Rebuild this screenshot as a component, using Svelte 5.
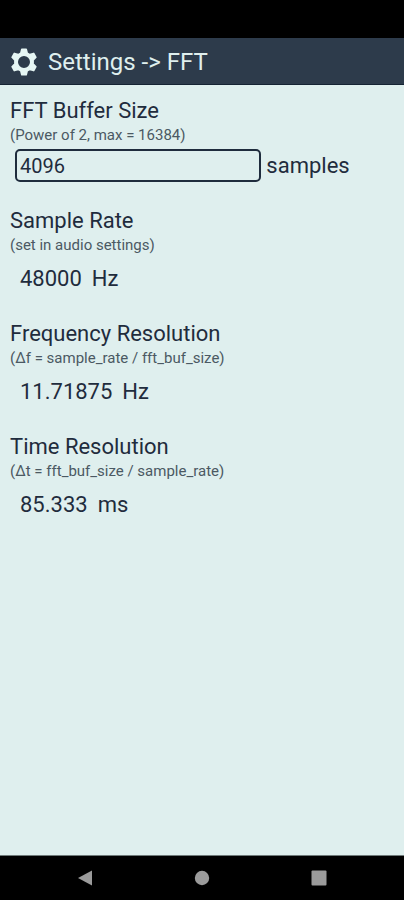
<script>
  let bufferSize = $state('4096');

  const readouts = [
    { title: 'Sample Rate', hint: '(set in audio settings)', value: '48000', unit: 'Hz' },
    { title: 'Frequency Resolution', hint: '(Δf = sample_rate / fft_buf_size)', value: '11.71875', unit: 'Hz' },
    { title: 'Time Resolution', hint: '(Δt = fft_buf_size / sample_rate)', value: '85.333', unit: 'ms' }
  ];
</script>

<div class="screen">
  <div class="status"></div>
  <header>
    <svg class="gear" viewBox="0 0 28 28" aria-hidden="true">
      <path
        fill-rule="evenodd"
        stroke-linejoin="round"
        d="M11.8 1.2h4.4l1 3.9 2.6 1.5 3.9-1.2 2.2 3.9-2.8 2.8v3.8l2.8 2.8-2.2 3.9-3.9-1.2-2.6 1.5-1 3.9h-4.4l-1-3.9-2.6-1.5-3.9 1.2-2.2-3.9 2.8-2.8v-3.8l-2.8-2.8 2.2-3.9 3.9 1.2 2.6-1.5zM14 7.2a6.8 6.8 0 1 0 0 13.6a6.8 6.8 0 1 0 0-13.6z"
      />
    </svg>
    <h1>Settings -&gt; FFT</h1>
  </header>

  <main>
    <section>
      <h2><label for="buffer">FFT Buffer Size</label></h2>
      <p class="hint" id="buffer-hint">(Power of 2, max = 16384)</p>
      <div class="field">
        <input id="buffer" type="text" inputmode="numeric" aria-describedby="buffer-hint" bind:value={bufferSize} />
        <span>samples</span>
      </div>
    </section>
    {#each readouts as item}
      <section>
        <h2>{item.title}</h2>
        <p class="hint">{item.hint}</p>
        <p class="value"><span>{item.value}</span><span>{item.unit}</span></p>
      </section>
    {/each}
  </main>

  <nav>
    <button aria-label="Back"><svg viewBox="0 0 16 16"><path d="M1 8L15 0.5v15z" /></svg></button>
    <button aria-label="Home"><svg viewBox="0 0 16 16"><circle cx="8" cy="8" r="7.2" /></svg></button>
    <button aria-label="Recent apps"><svg viewBox="0 0 16 16"><rect x="0.5" y="0.5" width="15" height="15" rx="1" /></svg></button>
  </nav>
</div>

<style>
  :global(body) {
    margin: 0;
    background: #dfefee;
  }
  .screen {
    display: flex;
    flex-direction: column;
    min-height: 100vh;
    background: #dfefee;
    color: #1f2c3d;
    font-family: Roboto, 'Liberation Sans', sans-serif;
    font-size: 22px;
    line-height: 28px;
  }
  .status {
    height: 38px;
    background: #000;
  }
  header {
    display: flex;
    align-items: center;
    gap: 10px;
    height: 44px;
    padding: 2px 10px 0;
    background: #2d3b4b;
    border-bottom: 1px solid #152333;
    color: #dfefee;
  }
  .gear {
    width: 28px;
    height: 28px;
    fill: #e6f6f4;
    stroke: #e6f6f4;
    stroke-width: 1.6;
  }
  h1,
  h2,
  p {
    margin: 0;
    font-size: 22px;
    font-weight: 400;
  }
  h1 {
    font-size: 24px;
  }
  main {
    flex: 1;
    display: flex;
    flex-direction: column;
    gap: 25px;
    padding: 12px 10px;
  }
  .hint {
    font-size: 15px;
    line-height: 20px;
    color: #4b5963;
  }
  .field {
    display: flex;
    align-items: center;
    gap: 5px;
    margin: 4px 0 0 5px;
  }
  input {
    box-sizing: border-box;
    width: 65%;
    height: 33px;
    padding: 0 3px;
    border: 2px solid #1f2c3d;
    border-radius: 5px;
    background: transparent;
    color: inherit;
    font: inherit;
    font-size: 20px;
  }
  .value {
    display: flex;
    gap: 10px;
    padding: 10px 10px 2px;
  }
  nav {
    display: flex;
    justify-content: center;
    gap: 25%;
    height: 44px;
    background: #000;
    border-top: 1px solid #6f7a79;
  }
  button {
    display: flex;
    align-items: center;
    padding: 0;
    border: 0;
    background: none;
  }
  button svg {
    width: 16px;
    height: 16px;
    fill: #9b9b9b;
  }
</style>
